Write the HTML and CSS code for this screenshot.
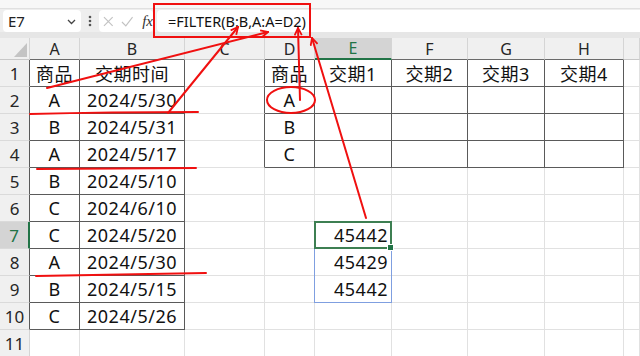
FILE: index.html
```html
<!DOCTYPE html>
<html lang="zh">
<head>
<meta charset="utf-8">
<title>FILTER</title>
<link rel="stylesheet" href="styles.css">
</head>
<body>
<div class="app">
  <div class="bar">
    <div class="namebox"><span>E7</span><svg class="chev" width="9" height="6" viewBox="0 0 9 6"><path d="M1 1L4.5 4.5L8 1" fill="none" stroke="#444" stroke-width="1.3"/></svg></div>
    <div class="dots"><svg width="4" height="12" viewBox="0 0 4 12"><circle cx="2" cy="2" r="1.3"/><circle cx="2" cy="6" r="1.3"/><circle cx="2" cy="10" r="1.3"/></svg></div>
    <div class="fxbox">
      <svg class="ico-x" width="11" height="11" viewBox="0 0 11 11"><path d="M1 1L10 10M10 1L1 10" stroke="#c2c2c2" stroke-width="1.2"/></svg>
      <svg class="ico-ok" width="13" height="11" viewBox="0 0 13 11"><path d="M1 6L5 10L12 1" fill="none" stroke="#c2c2c2" stroke-width="1.2"/></svg>
      <span class="fx">fx</span>
    </div>
    <div class="formula">=FILTER(B:B,A:A=D2)</div>
  </div>

  <div class="sheet">
    <div class="corner"></div><div class="ch tb">A</div><div class="ch tb">B</div><div class="ch">C</div><div class="ch tb">D</div><div class="ch tb sel">E</div><div class="ch tb">F</div><div class="ch tb">G</div><div class="ch tb">H</div><div class="ch"></div>

    <div class="rh t">1</div><div class="c t">商品</div><div class="c t">交期时间</div><div class="c tr"></div><div class="c t">商品</div><div class="c t">交期1</div><div class="c t">交期2</div><div class="c t">交期3</div><div class="c t">交期4</div><div class="c"></div>

    <div class="rh t">2</div><div class="c t">A</div><div class="c t">2024/5/30</div><div class="c tr"></div><div class="c t">A</div><div class="c t"></div><div class="c t"></div><div class="c t"></div><div class="c t"></div><div class="c"></div>

    <div class="rh t">3</div><div class="c t">B</div><div class="c t">2024/5/31</div><div class="c tr"></div><div class="c t">B</div><div class="c t"></div><div class="c t"></div><div class="c t"></div><div class="c t"></div><div class="c"></div>

    <div class="rh t">4</div><div class="c t">A</div><div class="c t">2024/5/17</div><div class="c tr"></div><div class="c t">C</div><div class="c t"></div><div class="c t"></div><div class="c t"></div><div class="c t"></div><div class="c"></div>

    <div class="rh t">5</div><div class="c t">B</div><div class="c t">2024/5/10</div><div class="c"></div><div class="c"></div><div class="c"></div><div class="c"></div><div class="c"></div><div class="c"></div><div class="c"></div>

    <div class="rh t">6</div><div class="c t">C</div><div class="c t">2024/6/10</div><div class="c"></div><div class="c"></div><div class="c"></div><div class="c"></div><div class="c"></div><div class="c"></div><div class="c"></div>

    <div class="rh t sel">7</div><div class="c t">C</div><div class="c t">2024/5/20</div><div class="c"></div><div class="c"></div><div class="c num anchor">45442<span class="range"></span><span class="act"><span class="handle"></span></span></div><div class="c"></div><div class="c"></div><div class="c"></div><div class="c"></div>

    <div class="rh t">8</div><div class="c t">A</div><div class="c t">2024/5/30</div><div class="c"></div><div class="c"></div><div class="c num">45429</div><div class="c"></div><div class="c"></div><div class="c"></div><div class="c"></div>

    <div class="rh t">9</div><div class="c t">B</div><div class="c t">2024/5/15</div><div class="c"></div><div class="c"></div><div class="c num">45442</div><div class="c"></div><div class="c"></div><div class="c"></div><div class="c"></div>

    <div class="rh t">10</div><div class="c t">C</div><div class="c t">2024/5/26</div><div class="c"></div><div class="c"></div><div class="c"></div><div class="c"></div><div class="c"></div><div class="c"></div><div class="c"></div>

    <div class="rh">11</div><div class="c"></div><div class="c"></div><div class="c"></div><div class="c"></div><div class="c"></div><div class="c"></div><div class="c"></div><div class="c"></div><div class="c"></div>
  </div>

  <svg class="marks" width="640" height="356" viewBox="0 0 640 356">
    <defs>
      <marker id="ah" viewBox="0 0 10 10" refX="9" refY="5" markerWidth="9" markerHeight="9" markerUnits="userSpaceOnUse" orient="auto">
        <path d="M1 1L9 5L1 9" fill="none" stroke="#f01010" stroke-width="2"/>
      </marker>
    </defs>
    <g fill="none" stroke="#f01010" stroke-width="2" stroke-linecap="round">
      <rect x="154" y="4" width="156" height="33"/>
      <path d="M30 114Q110 112 198 112"/>
      <path d="M37 169L196 168"/>
      <path d="M36 276L206 273"/>
      <ellipse cx="291" cy="100" rx="24" ry="13"/>
      <path d="M47 88L268 32" marker-end="url(#ah)"/>
      <path d="M168 113L238 27" marker-end="url(#ah)"/>
      <path d="M300 100L298 28" marker-end="url(#ah)"/>
      <path d="M366 218L312 38" marker-end="url(#ah)"/>
    </g>
  </svg>
</div>
</body>
</html>
```

FILE: styles.css
```css
body {
  margin: 0;
  background: #ffffff;
  font-family: "Noto Sans", "Noto Sans CJK SC", sans-serif;
}

.app {
  position: relative;
  width: 640px;
  height: 356px;
  overflow: hidden;
}

/* formula bar */
.bar {
  height: 38px;
  box-sizing: border-box;
  padding: 10px 0 0 3px;
  display: flex;
  align-items: flex-start;
  background: linear-gradient(to bottom, #f7f7f7 0, #f7f7f7 8px, #e0e0e0 8px, #e0e0e0 9px, #eeeeee 9px, #eeeeee 32px, #e6e6e6 32px);
}

.namebox {
  width: 78px;
  height: 22px;
  box-sizing: border-box;
  background: #ffffff;
  border-radius: 4px;
  display: flex;
  align-items: center;
  justify-content: space-between;
  padding: 0 5px 0 5px;
  font-size: 15px;
  color: #222;
}

.chev { margin-top: 2px; }

.dots {
  width: 18px;
  height: 22px;
  display: flex;
  align-items: center;
  justify-content: center;
  fill: #555;
}

.fxbox {
  width: 54px;
  height: 22px;
  box-sizing: border-box;
  background: #ffffff;
  border-radius: 4px;
  display: flex;
  align-items: center;
  padding-left: 4px;
}

.ico-ok { margin-left: 7px; }

.fx {
  margin-left: 9px;
  font-family: "Liberation Serif", "DejaVu Serif", serif;
  font-style: italic;
  font-size: 15px;
  color: #333;
}

.formula {
  flex: 1;
  margin-left: 4px;
  height: 22px;
  line-height: 22px;
  background: #ffffff;
  border-radius: 4px 0 0 4px;
  padding-left: 11px;
  font-size: 14.5px;
  color: #111;
}

/* grid */
.sheet {
  display: grid;
  grid-template-columns: 30px 50px 105px 80px 50px 77px 76px 77px 79px 1fr;
  grid-template-rows: 22px repeat(11, 27px);
}

:where(.sheet > div) {
  box-sizing: border-box;
  display: flex;
  align-items: center;
  justify-content: center;
  border-right: 1px solid #e1e1e1;
  border-bottom: 1px solid #e1e1e1;
  white-space: nowrap;
}

.corner {
  position: relative;
  background: #f0f0f0;
  border-right-color: #d5d5d5;
  border-bottom-color: #c8c8c8;
}

.corner::after {
  content: "";
  position: absolute;
  right: 2px;
  bottom: 2px;
  width: 13px;
  height: 14px;
  background: #c4c4c4;
  clip-path: polygon(100% 0, 100% 100%, 0 100%);
}

.ch {
  background: #f0f0f0;
  border-right-color: #d5d5d5;
  border-bottom-color: #c8c8c8;
  font-size: 16px;
  color: #262626;
}

.ch.tb { border-bottom-color: #6a6a6a; }

.ch.sel {
  background: #d4d4d4;
  color: #217346;
  border-bottom: 2px solid #217346;
}

.rh {
  background: #f0f0f0;
  border-right-color: #d5d5d5;
  border-bottom-color: #dadada;
  font-size: 17px;
  color: #262626;
}

.rh.t { border-right-color: #5a5a5a; }

.rh.sel {
  background: #d4d4d4;
  color: #217346;
  border-right: 2px solid #217346;
}

.c {
  font-size: 18px;
  color: #111;
  letter-spacing: 0.5px;
}

.c.t {
  border-right-color: #5a5a5a;
  border-bottom-color: #5a5a5a;
}

.c.tr { border-right-color: #5a5a5a; }

.num {
  justify-content: flex-end;
  padding-right: 3px;
}

/* selection overlay */
.anchor { position: relative; }

.range {
  position: absolute;
  left: -1px;
  top: -1px;
  width: 78px;
  height: 82px;
  box-sizing: border-box;
  border: 1px solid #7f9fe0;
}

.act {
  position: absolute;
  left: -1px;
  top: -1px;
  width: 78px;
  height: 28px;
  box-sizing: border-box;
  border: 2px solid #3d7f52;
}

.handle {
  position: absolute;
  right: -4px;
  bottom: -4px;
  width: 5px;
  height: 5px;
  background: #217346;
  border: 1px solid #ffffff;
}

.marks {
  position: absolute;
  left: 0;
  top: 0;
  pointer-events: none;
}
```
